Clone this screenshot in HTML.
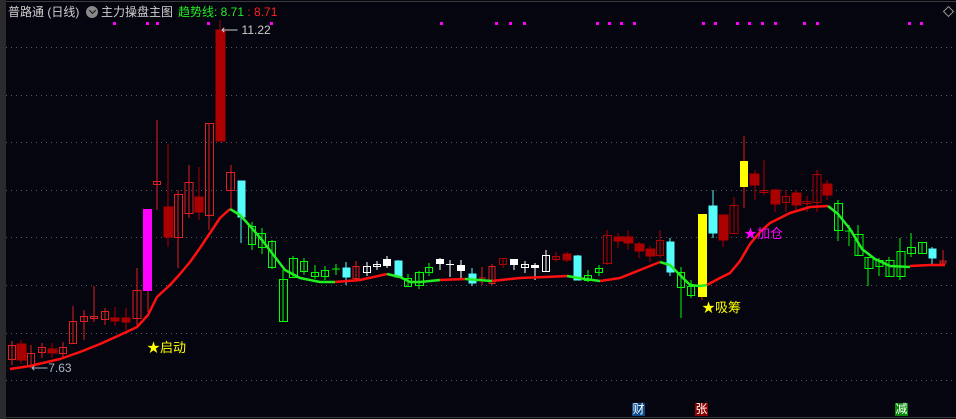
<!DOCTYPE html>
<html><head><meta charset="utf-8"><style>
html,body{margin:0;padding:0;background:#05050f;width:956px;height:419px;overflow:hidden;font-family:"Liberation Sans","Noto Sans CJK SC",sans-serif}
.t{position:absolute;white-space:nowrap;font-size:13px;line-height:16px}
.h{font-size:12px}
.b{position:absolute;top:403px;width:13px;height:13px;font-size:12px;line-height:13px;color:#fff;text-align:center}
</style></head><body>
<svg width="956" height="419" style="position:absolute;left:0;top:0">
<rect x="0" y="0" width="6" height="419" fill="#2b2b2e"/>
<line x1="6" y1="1.5" x2="956" y2="1.5" stroke="#3a3a3a"/>
<line x1="6" y1="417.5" x2="956" y2="417.5" stroke="#3a3a3a"/>
<g stroke="#5a5a66" stroke-dasharray="1 4">
<line x1="6" x2="956" y1="47.5" y2="47.5"/><line x1="6" x2="956" y1="95.5" y2="95.5"/><line x1="6" x2="956" y1="142.5" y2="142.5"/><line x1="6" x2="956" y1="190.5" y2="190.5"/><line x1="6" x2="956" y1="237.5" y2="237.5"/><line x1="6" x2="956" y1="285.5" y2="285.5"/><line x1="6" x2="956" y1="333.5" y2="333.5"/><line x1="6" x2="956" y1="380.5" y2="380.5"/>
</g>
<g fill="#ff00ff">
<rect x="113" y="22" width="3" height="3"/><rect x="146" y="22" width="3" height="3"/><rect x="156" y="22" width="3" height="3"/><rect x="207" y="22" width="3" height="3"/><rect x="270" y="22" width="3" height="3"/><rect x="440" y="22" width="3" height="3"/><rect x="495" y="22" width="3" height="3"/><rect x="509" y="22" width="3" height="3"/><rect x="523" y="22" width="3" height="3"/><rect x="596" y="22" width="3" height="3"/><rect x="608" y="22" width="3" height="3"/><rect x="620" y="22" width="3" height="3"/><rect x="633" y="22" width="3" height="3"/><rect x="702" y="22" width="3" height="3"/><rect x="714" y="22" width="3" height="3"/><rect x="736" y="22" width="3" height="3"/><rect x="748" y="22" width="3" height="3"/><rect x="761" y="22" width="3" height="3"/><rect x="774" y="22" width="3" height="3"/><rect x="803" y="22" width="3" height="3"/><rect x="816" y="22" width="3" height="3"/><rect x="908" y="22" width="3" height="3"/><rect x="920" y="22" width="3" height="3"/>
</g>
<rect x="945" y="8" width="7" height="7" fill="none" stroke="#999" transform="rotate(45 948.5 11.5)"/>
<g stroke="#e02020" fill="none" stroke-width="1">
<line x1="12" x2="12" y1="341" y2="365"/><rect x="8.5" y="345.5" width="7" height="14"/>
<line x1="31" x2="31" y1="345" y2="368"/><rect x="27.5" y="353.5" width="7" height="12"/>
<line x1="42" x2="42" y1="343" y2="358"/><rect x="38.5" y="347.5" width="7" height="5"/>
<line x1="63" x2="63" y1="342" y2="358"/><rect x="59.5" y="347.5" width="7" height="6"/>
<line x1="73" x2="73" y1="306" y2="343"/><rect x="69.5" y="321.5" width="7" height="22"/>
<line x1="84" x2="84" y1="310" y2="340"/><rect x="80.5" y="316.5" width="7" height="5"/>
<line x1="94" x2="94" y1="286" y2="322"/><rect x="90.5" y="316.5" width="7" height="2"/>
<line x1="105" x2="105" y1="308" y2="325"/><rect x="101.5" y="311.5" width="7" height="8"/>
<line x1="137" x2="137" y1="268" y2="325"/><rect x="133" y="290.5" width="8" height="28"/>
<line x1="157" x2="157" y1="120" y2="210"/><rect x="153.5" y="181.5" width="7" height="3"/>
<line x1="178" x2="178" y1="190" y2="268"/><rect x="174.5" y="194.5" width="8" height="43"/>
<line x1="189" x2="189" y1="165" y2="218"/><rect x="185" y="182.5" width="8" height="31"/>
<line x1="209" x2="209" y1="123" y2="230"/><rect x="205.5" y="123.5" width="8" height="92"/>
<line x1="231" x2="231" y1="165" y2="208"/><rect x="226.5" y="172.5" width="8" height="18"/>
<line x1="356" x2="356" y1="261" y2="282"/><rect x="353" y="266.5" width="6" height="12"/>
<line x1="482" x2="482" y1="267" y2="285"/><line x1="479" x2="486" y1="278" y2="278"/>
<line x1="492" x2="492" y1="264" y2="285"/><rect x="489" y="266.5" width="6" height="17"/>
<line x1="943" x2="943" y1="250" y2="263"/><rect x="940" y="261" width="6" height="2"/>
</g>
<g stroke="#b00000" fill="none">
<line x1="503" x2="503" y1="258" y2="268"/><rect x="499.5" y="258.5" width="7" height="6"/>
<line x1="556" x2="556" y1="252" y2="262"/><rect x="552.5" y="256.5" width="7" height="3"/>
<line x1="607" x2="607" y1="230" y2="265"/><rect x="603.5" y="235.5" width="8" height="28"/>
<line x1="660" x2="660" y1="230" y2="258"/><rect x="656.5" y="240.5" width="7" height="15"/>
<line x1="734" x2="734" y1="197" y2="233"/><rect x="730" y="205.5" width="8" height="28"/>
<line x1="764" x2="764" y1="160" y2="195"/><rect x="760" y="190.5" width="8" height="2"/>
<line x1="786" x2="786" y1="190" y2="212"/><rect x="782.5" y="196.5" width="7" height="6"/>
<line x1="807" x2="807" y1="196" y2="212"/><rect x="803" y="201.5" width="8" height="2"/>
<line x1="817" x2="817" y1="170" y2="212"/><rect x="813" y="174.5" width="8" height="28"/>
</g>
<g fill="#aa0000" stroke="#aa0000">
<line x1="21" x2="21" y1="340" y2="364"/><rect x="17" y="344" width="9" height="16"/>
<line x1="52" x2="52" y1="343" y2="358"/><rect x="48" y="349" width="9" height="4"/>
<line x1="115" x2="115" y1="307" y2="326"/><rect x="111" y="318" width="8" height="3"/>
<line x1="126" x2="126" y1="308" y2="330"/><rect x="122" y="318" width="8" height="4"/>
<line x1="168" x2="168" y1="144" y2="247"/><rect x="164" y="207" width="9" height="30"/>
<line x1="199" x2="199" y1="167" y2="220"/><rect x="195" y="197" width="8" height="15"/>
<line x1="220" x2="220" y1="20" y2="142"/><rect x="216" y="30" width="9" height="111"/>
<line x1="567" x2="567" y1="252" y2="262"/><rect x="563" y="254" width="8" height="6"/>
<line x1="618" x2="618" y1="233" y2="248"/><rect x="614" y="237" width="9" height="4"/>
<line x1="628" x2="628" y1="230" y2="250"/><rect x="624" y="237" width="9" height="6"/>
<line x1="639" x2="639" y1="242" y2="258"/><rect x="635" y="244" width="9" height="7"/>
<line x1="650" x2="650" y1="246" y2="262"/><rect x="646" y="249" width="9" height="7"/>
<line x1="723" x2="723" y1="215" y2="247"/><rect x="719" y="215" width="9" height="25"/>
<line x1="755" x2="755" y1="170" y2="200"/><rect x="750" y="174" width="9" height="11"/>
<line x1="775" x2="775" y1="190" y2="212"/><rect x="771" y="190" width="9" height="14"/>
<line x1="796" x2="796" y1="190" y2="210"/><rect x="792" y="193" width="9" height="12"/>
<line x1="827" x2="827" y1="180" y2="200"/><rect x="823" y="184" width="9" height="11"/>
</g>
<rect x="143" y="209" width="9" height="82" fill="#ff00ff"/>
<line x1="148" x2="148" y1="291" y2="312" stroke="#e02020"/>
<line x1="702" x2="702" y1="297" y2="300" stroke="#e02020"/>
<rect x="698" y="214" width="9" height="83" fill="#ffff00"/>
<line x1="744" x2="744" y1="136" y2="208" stroke="#e02020"/>
<rect x="740" y="161" width="8" height="26" fill="#ffff00"/>
<g stroke="#54fcfc" fill="#54fcfc">
<line x1="241" x2="241" y1="181" y2="243"/><rect x="238" y="181" width="7" height="36"/>
<line x1="346" x2="346" y1="262" y2="285"/><rect x="343" y="268" width="7" height="9"/>
<line x1="398" x2="398" y1="260" y2="278"/><rect x="395" y="261" width="7" height="16"/>
<line x1="472" x2="472" y1="268" y2="286"/><rect x="469" y="274" width="7" height="9"/>
<line x1="578" x2="578" y1="255" y2="280"/><rect x="574" y="256" width="7" height="24"/>
<line x1="670" x2="670" y1="238" y2="276"/><rect x="667" y="242" width="7" height="30"/>
<line x1="713" x2="713" y1="190" y2="238"/><rect x="709" y="206" width="8" height="27"/>
<line x1="932" x2="932" y1="247" y2="265"/><rect x="929" y="249" width="7" height="9"/>
</g>
<g stroke="#ffffff" fill="none">
<line x1="367" x2="367" y1="262" y2="276"/><rect x="363.5" y="266.5" width="7" height="6"/>
<line x1="377" x2="377" y1="261" y2="270"/><rect x="373.5" y="264.5" width="7" height="2"/>
<line x1="387" x2="387" y1="256" y2="268"/><rect x="383.5" y="259.5" width="7" height="6" fill="#fff"/>
<line x1="440" x2="440" y1="258" y2="270"/><rect x="436.5" y="259.5" width="7" height="4" fill="#fff"/>
<line x1="450" x2="450" y1="260" y2="277"/><line x1="446" x2="454" y1="264.5" y2="264.5"/>
<line x1="461" x2="461" y1="260" y2="279"/><rect x="457.5" y="265.5" width="7" height="5" fill="#fff"/>
<line x1="514" x2="514" y1="259" y2="270"/><rect x="510.5" y="259.5" width="7" height="5" fill="#fff"/>
<line x1="525" x2="525" y1="261" y2="273"/><rect x="521.5" y="264.5" width="7" height="3"/>
<line x1="535" x2="535" y1="263" y2="280"/><rect x="531.5" y="265.5" width="7" height="2" fill="#fff"/>
<line x1="546" x2="546" y1="250" y2="272"/><rect x="542.5" y="255.5" width="7" height="16"/>
</g>
<g stroke="#00ff00" fill="none">
<line x1="252" x2="252" y1="222" y2="250"/><rect x="248.5" y="226.5" width="7" height="18"/>
<line x1="262" x2="262" y1="228" y2="254"/><rect x="258.5" y="233.5" width="7" height="14"/>
<line x1="272" x2="272" y1="240" y2="269"/><rect x="268.5" y="241.5" width="7" height="26"/>
<line x1="283" x2="283" y1="270" y2="322"/><rect x="279.5" y="279.5" width="8" height="42"/>
<line x1="293" x2="293" y1="256" y2="278"/><rect x="289.5" y="258.5" width="8" height="19"/>
<line x1="304" x2="304" y1="258" y2="275"/><rect x="300.5" y="261.5" width="7" height="10"/>
<line x1="315" x2="315" y1="265" y2="279"/><rect x="311.5" y="272.5" width="7" height="4"/>
<line x1="325" x2="325" y1="266" y2="280"/><rect x="321.5" y="270.5" width="7" height="6"/>
<line x1="336" x2="336" y1="264" y2="275"/><line x1="332" x2="340" y1="269" y2="269"/>
<line x1="408" x2="408" y1="274" y2="287"/><rect x="404.5" y="278.5" width="7" height="8"/>
<line x1="419" x2="419" y1="271" y2="289"/><rect x="415.5" y="272.5" width="8" height="13"/>
<line x1="429" x2="429" y1="263" y2="276"/><rect x="425.5" y="267.5" width="7" height="5"/>
<line x1="588" x2="588" y1="270" y2="282"/><rect x="584.5" y="275.5" width="7" height="5"/>
<line x1="599" x2="599" y1="265" y2="276"/><rect x="595.5" y="268.5" width="7" height="4"/>
<line x1="681" x2="681" y1="267" y2="318"/><rect x="677.5" y="272.5" width="7" height="15"/>
<line x1="691" x2="691" y1="280" y2="298"/><rect x="687.5" y="286.5" width="7" height="9"/>
<line x1="838" x2="838" y1="200" y2="241"/><rect x="834.5" y="203.5" width="8" height="27"/>
<line x1="849" x2="849" y1="225" y2="246"/><line x1="845" x2="853" y1="231" y2="231"/>
<line x1="858" x2="858" y1="225" y2="255"/><rect x="855" y="234.5" width="8" height="21"/>
<line x1="868" x2="868" y1="257" y2="286"/><rect x="865" y="257.5" width="8" height="11"/>
<line x1="879" x2="879" y1="258" y2="276"/><rect x="876" y="260.5" width="7" height="6"/>
<line x1="889" x2="889" y1="257" y2="276"/><rect x="886" y="260.5" width="8" height="16"/>
<line x1="900" x2="900" y1="238" y2="280"/><rect x="897" y="251.5" width="8" height="25"/>
<line x1="911" x2="911" y1="233" y2="257"/><rect x="907.5" y="247.5" width="8" height="6"/>
<line x1="922" x2="922" y1="242" y2="254"/><rect x="918.5" y="242.5" width="8" height="11"/>
</g>
<g fill="none" stroke-width="2.5" stroke-linejoin="round">
<polyline stroke="#ff1010" points="10,369 30,366 60,359 80,352 100,344 120,335 137,327 148,315 157,297 170,285 180,274 190,262 200,248 210,233 220,218 230,209"/>
<polyline stroke="#22ee22" points="230,209 240,215 250,226 262,240 275,257 285,270 300,278 320,282 335,282"/>
<polyline stroke="#ff1010" points="335,282 360,280 387,274"/>
<polyline stroke="#22ee22" points="387,274 400,277 410,282 420,282 440,280"/>
<polyline stroke="#ff1010" points="440,280 465,279"/>
<polyline stroke="#22ee22" points="465,279 492,281"/>
<polyline stroke="#ff1010" points="492,281 520,278 545,277 567,276"/>
<polyline stroke="#22ee22" points="567,276 585,279 600,281"/>
<polyline stroke="#ff1010" points="600,281 620,278 640,270 660,262"/>
<polyline stroke="#22ee22" points="660,262 670,265 680,275 690,285 700,286 707,285"/>
<polyline stroke="#ff1010" points="707,285 718,279 730,273 740,261 750,244 760,232 770,223 790,213 810,207 828,206"/>
<polyline stroke="#22ee22" points="828,206 838,214 850,229 862,249 875,259 890,266 910,267"/>
<polyline stroke="#ff1010" points="910,266 930,265 945,265"/>
</g>
</svg>
<div class="t h" style="left:8px;top:4px;color:#d0d0d0">普路通 (日线)</div>
<div style="position:absolute;left:86px;top:6px;width:12px;height:12px;border-radius:50%;background:#888"></div>
<div style="position:absolute;left:89.5px;top:7.5px;width:4px;height:4px;border-right:1.5px solid #111;border-bottom:1.5px solid #111;transform:rotate(45deg)"></div>
<div class="t h" style="left:101px;top:4px;color:#d0d0d0">主力操盘主图</div>
<div class="t h" style="left:178px;top:4px;color:#22ee22">趋势线: 8.71 <span style="color:#ff2020">: 8.71</span></div>
<div class="t" style="left:221px;top:22px;color:#ccc;font-size:12px">⟵ 11.22</div>
<div class="t" style="left:31px;top:360px;color:#a8b8c8;font-size:12px">⟵7.63</div>
<div class="t" style="left:147px;top:340px;color:#ffff00">★启动</div>
<div class="t" style="left:702px;top:300px;color:#ffff00">★吸筹</div>
<div class="t" style="left:744px;top:226px;color:#ff00ff">★加仓</div>
<div class="b" style="left:632px;background:#0a4a8a">财</div>
<div class="b" style="left:695px;background:#8a0000">张</div>
<div class="b" style="left:895px;background:#0a8a0a">减</div>
</body></html>
